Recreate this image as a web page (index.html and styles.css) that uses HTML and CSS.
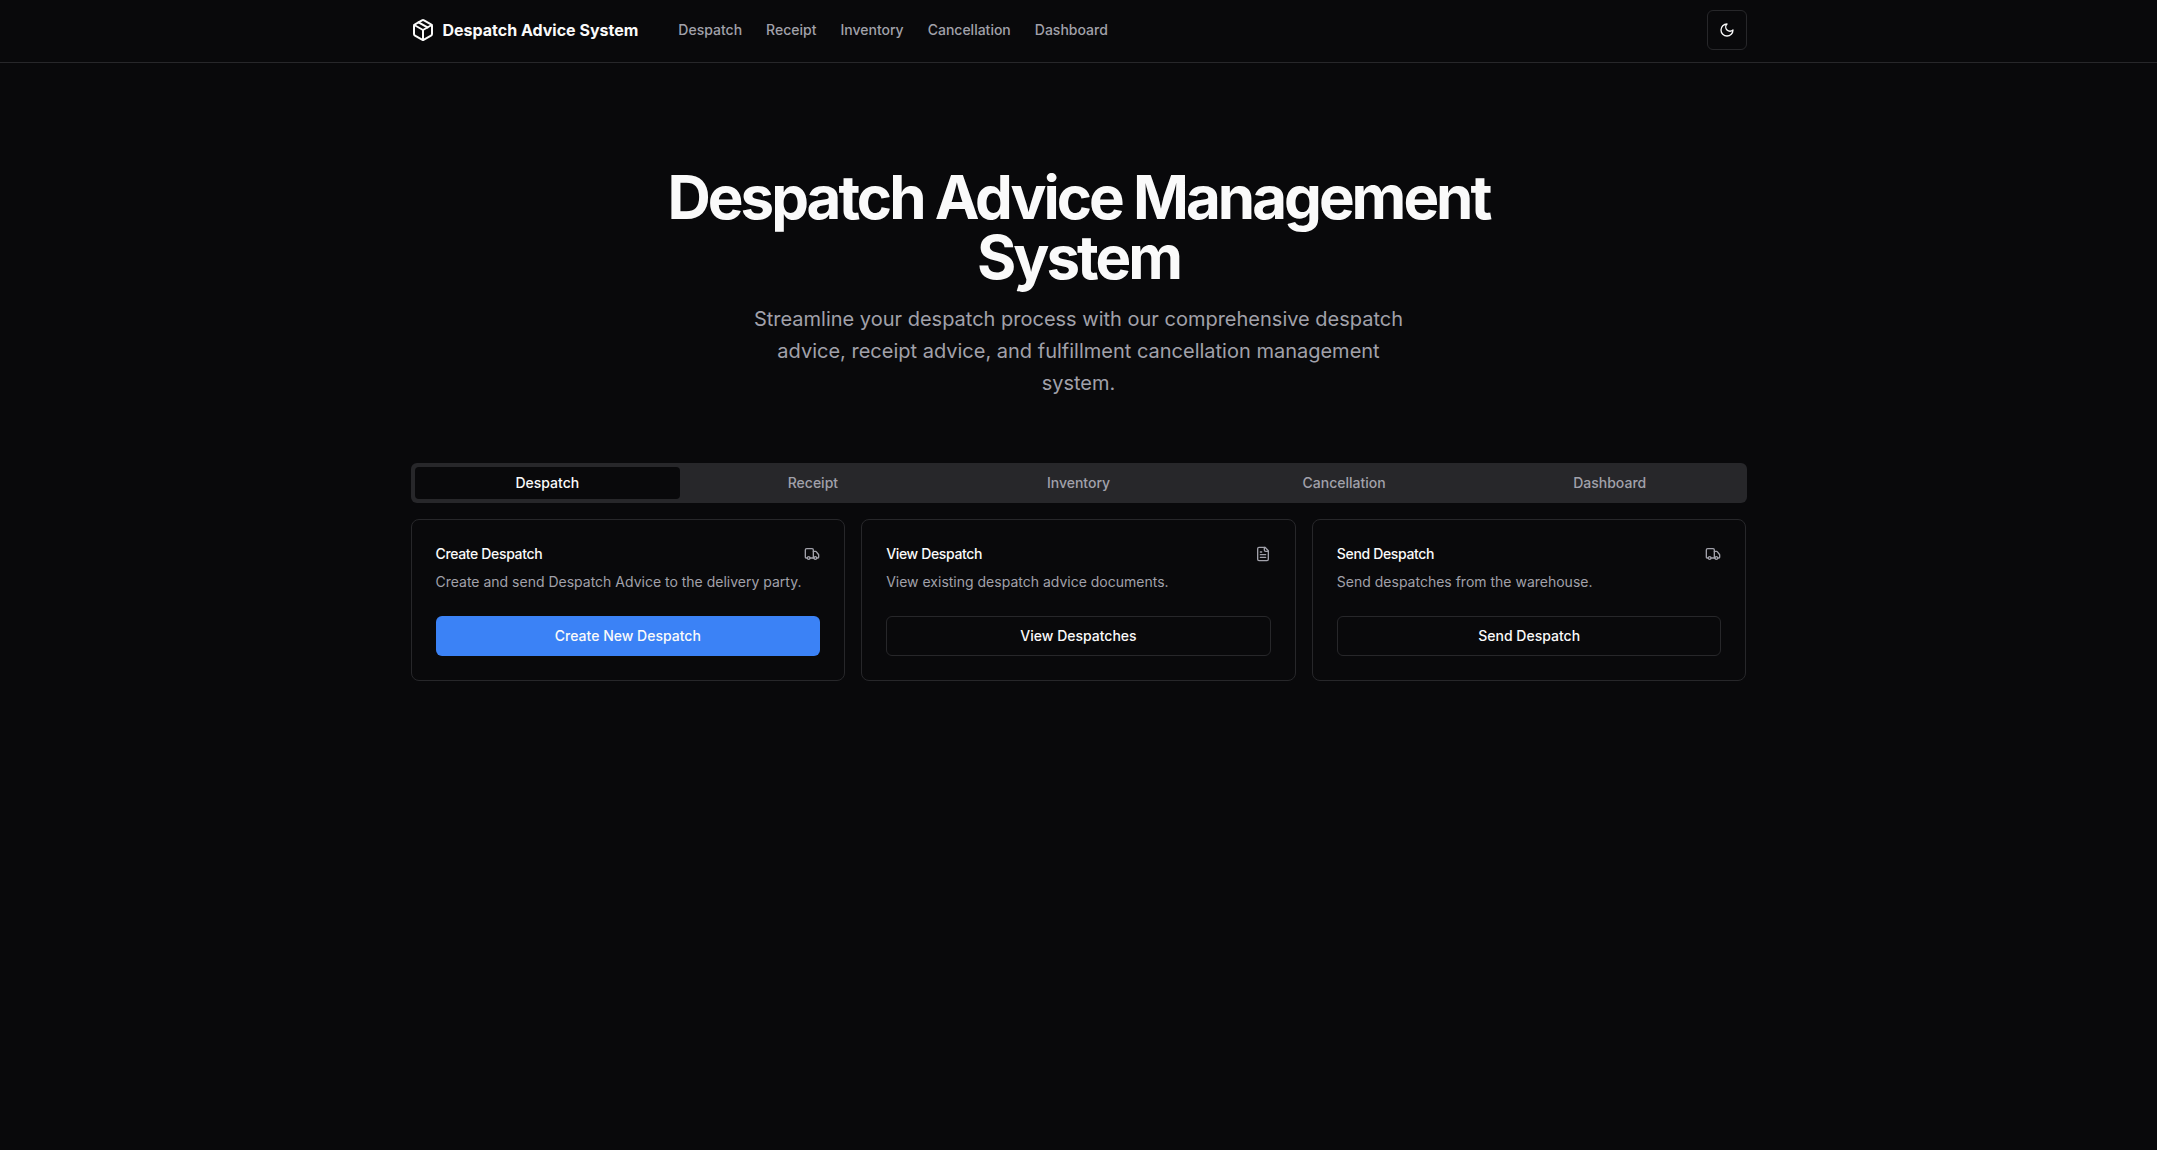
FILE: index.html
```html
<!DOCTYPE html>
<html lang="en">
<head>
<meta charset="utf-8">
<meta name="viewport" content="width=device-width, initial-scale=1">
<title>Despatch Advice System</title>
<link rel="stylesheet" href="styles.css">
</head>
<body>
<svg class="sprite" aria-hidden="true">
  <symbol id="truck" viewBox="0 0 24 24">
    <path d="M14 18V6a2 2 0 0 0-2-2H4a2 2 0 0 0-2 2v11a1 1 0 0 0 1 1h2"/>
    <path d="M15 18H9"/>
    <path d="M19 18h2a1 1 0 0 0 1-1v-3.65a1 1 0 0 0-.22-.624l-3.48-4.35A1 1 0 0 0 17.52 8H14"/>
    <circle cx="17" cy="18" r="2"/>
    <circle cx="7" cy="18" r="2"/>
  </symbol>
</svg>
<div class="page">
  <header class="site-header">
    <div class="container header-row">
      <a class="brand" href="#">
        <svg class="icon icon-lg" viewBox="0 0 24 24" aria-hidden="true">
          <path d="m7.5 4.27 9 5.15"/>
          <path d="M21 8a2 2 0 0 0-1-1.73l-7-4a2 2 0 0 0-2 0l-7 4A2 2 0 0 0 3 8v8a2 2 0 0 0 1 1.73l7 4a2 2 0 0 0 2 0l7-4A2 2 0 0 0 21 16Z"/>
          <path d="m3.3 7 8.7 5 8.7-5"/>
          <path d="M12 22V12"/>
        </svg>
        <span>Despatch Advice System</span>
      </a>
      <nav class="nav" aria-label="Main">
        <a href="#despatch">Despatch</a>
        <a href="#receipt">Receipt</a>
        <a href="#inventory">Inventory</a>
        <a href="#cancellation">Cancellation</a>
        <a href="#dashboard">Dashboard</a>
      </nav>
      <button class="btn btn-outline btn-icon" type="button" aria-label="Toggle theme">
        <svg class="icon" viewBox="0 0 24 24" aria-hidden="true"><path d="M12 3a6 6 0 0 0 9 9 9 9 0 1 1-9-9Z"/></svg>
      </button>
    </div>
  </header>

  <main class="container">
    <section class="hero">
      <h1>Despatch Advice Management System</h1>
      <p>Streamline your despatch process with our comprehensive despatch advice, receipt advice, and fulfillment cancellation management system.</p>
    </section>

    <div class="tabs" role="tablist" aria-label="Sections">
      <button class="tab" type="button" role="tab" aria-selected="true">Despatch</button>
      <button class="tab" type="button" role="tab" aria-selected="false">Receipt</button>
      <button class="tab" type="button" role="tab" aria-selected="false">Inventory</button>
      <button class="tab" type="button" role="tab" aria-selected="false">Cancellation</button>
      <button class="tab" type="button" role="tab" aria-selected="false">Dashboard</button>
    </div>

    <section class="cards" role="tabpanel" aria-label="Despatch">
      <article class="card">
        <div class="card-head">
          <h2>Create Despatch</h2>
          <svg class="icon icon-muted" aria-hidden="true"><use href="#truck"/></svg>
        </div>
        <p>Create and send Despatch Advice to the delivery party.</p>
        <button class="btn btn-primary" type="button">Create New Despatch</button>
      </article>
      <article class="card">
        <div class="card-head">
          <h2>View Despatch</h2>
          <svg class="icon icon-muted" viewBox="0 0 24 24" aria-hidden="true">
            <path d="M15 2H6a2 2 0 0 0-2 2v16a2 2 0 0 0 2 2h12a2 2 0 0 0 2-2V7Z"/>
            <path d="M14 2v4a2 2 0 0 0 2 2h4"/>
            <path d="M10 9H8"/>
            <path d="M16 13H8"/>
            <path d="M16 17H8"/>
          </svg>
        </div>
        <p>View existing despatch advice documents.</p>
        <button class="btn btn-outline" type="button">View Despatches</button>
      </article>
      <article class="card">
        <div class="card-head">
          <h2>Send Despatch</h2>
          <svg class="icon icon-muted" aria-hidden="true"><use href="#truck"/></svg>
        </div>
        <p>Send despatches from the warehouse.</p>
        <button class="btn btn-outline" type="button">Send Despatch</button>
      </article>
    </section>
  </main>
</div>
</body>
</html>
```
FILE: styles.css
```css
:root {
  --bg: #09090b;
  --fg: #fafafa;
  --muted: #a1a1aa;
  --border: #27272a;
  --primary: #3b82f6;
}

* { box-sizing: border-box; }

body {
  margin: 0;
  background: var(--bg);
  color: var(--fg);
  font: 400 14px/20px Inter, "Liberation Sans", sans-serif;
}

h1, h2, p { margin: 0; }
a { color: inherit; text-decoration: none; }
button { font: inherit; color: inherit; cursor: pointer; }

.sprite { display: none; }

.page { min-height: 100vh; }

.container {
  width: 100%;
  max-width: 1400px;
  margin: 0 auto;
  padding: 0 32px;
}

.icon {
  flex: none;
  width: 16px;
  height: 16px;
  fill: none;
  stroke: currentColor;
  stroke-width: 2;
  stroke-linecap: round;
  stroke-linejoin: round;
}
.icon-lg { width: 24px; height: 24px; }
.icon-muted { color: var(--muted); }

.site-header { border-bottom: 1px solid var(--border); }

.header-row {
  display: flex;
  align-items: center;
  padding-top: 10px;
  padding-bottom: 12px;
}

.brand {
  display: flex;
  align-items: center;
  gap: 8px;
  margin-right: 40px;
  font-size: 16px;
  font-weight: 700;
  line-height: 24px;
}

.nav {
  display: flex;
  gap: 24px;
  margin-right: auto;
  color: var(--muted);
  font-weight: 500;
}

.btn {
  display: flex;
  align-items: center;
  justify-content: center;
  height: 40px;
  padding: 0 16px;
  border: 0;
  border-radius: 6px;
  font-weight: 500;
}
.btn-primary { background: var(--primary); }
.btn-outline { background: transparent; border: 1px solid var(--border); }
.btn-icon { width: 40px; padding: 0; }

.hero {
  display: flex;
  flex-direction: column;
  align-items: center;
  gap: 16px;
  padding: 104px 0 64px;
  text-align: center;
}
.hero h1 {
  max-width: 896px;
  font-size: 60px;
  font-weight: 700;
  line-height: 60px;
  letter-spacing: -0.05em;
}
.hero p {
  max-width: 672px;
  color: var(--muted);
  font-size: 20px;
  line-height: 32px;
}

.tabs {
  display: grid;
  grid-template-columns: repeat(5, 1fr);
  padding: 4px;
  border-radius: 6px;
  background: var(--border);
}
.tab {
  padding: 6px 12px;
  border: 0;
  border-radius: 4px;
  background: transparent;
  color: var(--muted);
  font-weight: 500;
}
.tab[aria-selected="true"] { background: var(--bg); color: var(--fg); }

.cards {
  display: grid;
  grid-template-columns: repeat(3, 1fr);
  gap: 16px;
  margin-top: 16px;
}
.card {
  padding: 24px;
  border: 1px solid var(--border);
  border-radius: 8px;
}
.card-head {
  display: flex;
  align-items: center;
  justify-content: space-between;
}
.card h2 {
  font-size: 14px;
  font-weight: 500;
  line-height: 20px;
  letter-spacing: -0.025em;
}
.card p { margin-top: 8px; color: var(--muted); }
.card .btn { width: 100%; margin-top: 24px; }

@media (max-width: 900px) {
  .nav { display: none; }
  .brand { margin-right: auto; }
  .cards { grid-template-columns: 1fr; }
  .hero h1 { font-size: 40px; line-height: 44px; }
}
```
